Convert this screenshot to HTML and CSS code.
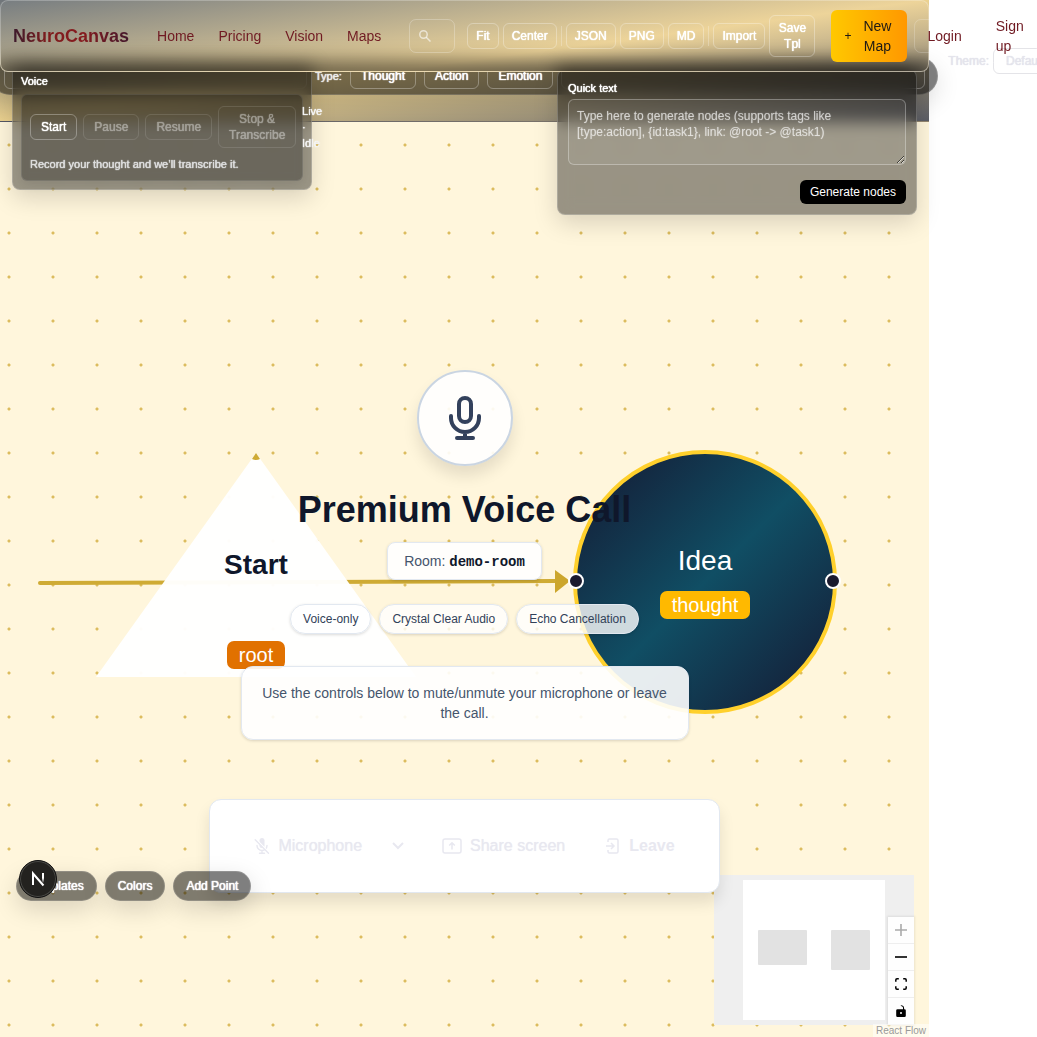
FILE: index.html
```html
<!DOCTYPE html>
<html lang="en">
<head>
<meta charset="utf-8">
<meta name="viewport" content="width=device-width, initial-scale=1">
<title>NeuroCanvas</title>
<link rel="stylesheet" href="styles.css">
</head>
<body>
<div class="app">
  <div class="band">
    <div class="themes">
      <label class="themes-label" for="theme">Theme:</label>
      <select class="themes-select" id="theme"><option>Default</option></select>
    </div>
    <div class="types">
      <span class="types-start"></span>
      <span class="types-label">Type:</span>
      <button class="btn btn-type">Thought</button>
      <button class="btn btn-type">Action</button>
      <button class="btn btn-type">Emotion</button>
      <span class="types-rest"></span>
    </div>
  </div>

  <main class="canvas">
    <svg class="edge" viewBox="0 0 540 30" aria-hidden="true">
      <path d="M3 16 L519 14" stroke="#cfab34" stroke-width="4" stroke-linecap="round"/>
      <path d="M518 3 L533 14 L518 26 Z" fill="#cca62c"/>
    </svg>
    <div class="node root-node">
      <svg class="root-shape" viewBox="0 0 320 224" aria-hidden="true">
        <path d="M160 0 L320 224 H0 Z" fill="#fff" fill-opacity=".97"/>
        <path d="M160 0 L164 6 Q160 8 156 6 Z" fill="#cfab34"/>
      </svg>
      <strong class="node-title root-title">Start</strong>
      <span class="tag tag-root">root</span>
    </div>
    <div class="node idea-node">
      <span class="node-title">Idea</span>
      <span class="tag tag-thought">thought</span>
      <i class="handle handle-left"></i>
      <i class="handle handle-right"></i>
    </div>

    <div class="map-tools">
      <svg class="minimap" viewBox="0 0 200 150" role="img" aria-label="Mini map">
        <rect width="200" height="150" fill="#efefef"/>
        <rect x="29" y="5" width="142" height="140" fill="#fff"/>
        <rect x="44" y="55" width="49" height="35" rx="1" fill="#e2e2e2"/>
        <rect x="117" y="55" width="39" height="40" rx="1" fill="#e2e2e2"/>
      </svg>
      <div class="zoom">
        <button class="zoom-btn" aria-label="Zoom in" disabled><svg viewBox="0 0 12 12"><path d="M6 0v12M0 6h12" stroke="#aaa" stroke-width="1.6"/></svg></button>
        <button class="zoom-btn" aria-label="Zoom out"><svg viewBox="0 0 12 12"><path d="M0 6h12" stroke="#000" stroke-width="1.6"/></svg></button>
        <button class="zoom-btn" aria-label="Fit view"><svg viewBox="0 0 12 12"><path d="M.8 3.8V2Q.8.8 2 .8h1.8M8.2.8H10q1.2 0 1.2 1.2v1.8M11.2 8.2V10q0 1.2-1.2 1.2H8.2M3.8 11.2H2Q.8 11.2.8 10V8.2" fill="none" stroke="#000" stroke-width="1.5"/></svg></button>
        <button class="zoom-btn" aria-label="Toggle lock"><svg viewBox="0 0 12 12"><path d="M2.5 4.3H8V2.6Q7.600 1 6 .9L5.700.2Q8.900.1 9.100 3v1.300h.4q1.300 0 1.300 1.200v5.200Q10.800 12 9.500 12h-7Q1.200 12 1.200 10.700V5.500Q1.200 4.300 2.500 4.300ZM6 7a1 1 0 1 0 0 2 1 1 0 0 0 0-2Z" fill="#000" fill-rule="evenodd"/></svg></button>
      </div>
    </div>
    <a class="credit" href="#">React Flow</a>
  </main>

  <section class="call">
    <div class="call-mic">
      <svg viewBox="0 0 48 48" fill="none" stroke="#33415c" stroke-width="4" stroke-linecap="round" aria-hidden="true">
        <rect x="18" y="4" width="12" height="24" rx="6"/>
        <path d="M10 22v2a14 14 0 0 0 28 0v-2M24 38v6M16 44h16"/>
      </svg>
    </div>
    <h1 class="call-title">Premium Voice Call</h1>
    <p class="call-room">Room: <code>demo-room</code></p>
    <ul class="chips">
      <li>Voice-only</li>
      <li>Crystal Clear Audio</li>
      <li>Echo Cancellation</li>
    </ul>
    <p class="call-info">Use the controls below to mute/unmute your microphone or leave the call.</p>
    <div class="call-bar">
      <button class="ctl ctl-mic">
        <svg width="16" height="16" viewBox="0 0 16 16" fill="none" stroke="currentColor" stroke-width="1.400" stroke-linecap="round"><rect x="5.500" y="0" width="5" height="10" rx="2.500" fill="currentColor" stroke="none"/><path d="M3 7.500a5 5 0 0 0 10 0M8 12.500v2.700M5.500 15.300h5"/><path d="M2.500 1.500l13 13.500" stroke="#fff" stroke-width="1.200"/><path d="M1.200 1.700l13.300 13.500"/></svg>
        Microphone
      </button>
      <button class="ctl ctl-menu" aria-label="Choose microphone">
        <svg width="12" height="8" viewBox="0 0 12 8" fill="none" stroke="currentColor" stroke-width="2"><path d="M1 1l5 5 5-5"/></svg>
      </button>
      <button class="ctl ctl-share">
        <svg width="20" height="16" viewBox="0 0 20 16" fill="none" stroke="currentColor" stroke-width="1.500"><rect x="1" y="1" width="18" height="14" rx="2"/><path d="M10 11.500V5M7.200 7.500L10 4.700l2.800 2.800"/></svg>
        Share screen
      </button>
      <button class="ctl ctl-leave">
        <svg width="16" height="16" viewBox="0 0 16 16" fill="none" stroke="currentColor" stroke-width="1.500"><path d="M3 4V2.500Q3 1 4.500 1h7Q13 1 13 2.500v11Q13 15 11.500 15h-7Q3 15 3 13.500V12M1 8h7.500M6 5l3 3-3 3"/></svg>
        Leave
      </button>
    </div>
  </section>

  <section class="panel voice">
    <h2 class="panel-title">Voice</h2>
    <div class="recorder">
      <div class="recorder-row">
        <button class="btn btn-rec">Start</button>
        <button class="btn btn-rec" disabled>Pause</button>
        <button class="btn btn-rec" disabled>Resume</button>
        <button class="btn btn-rec btn-stop" disabled>Stop &amp; Transcribe</button>
        <span class="recorder-state">Live · Idle</span>
      </div>
      <p class="recorder-note">Record your thought and we’ll transcribe it.</p>
    </div>
  </section>

  <section class="panel quick">
    <label class="panel-title" for="quick-text">Quick text</label>
    <textarea class="quick-input" id="quick-text" rows="3" placeholder="Type here to generate nodes (supports tags like [type:action], {id:task1}, link: @root -&gt; @task1)"></textarea>
    <button class="quick-go">Generate nodes</button>
  </section>

  <div class="dock">
    <button class="dock-btn">Templates</button>
    <button class="dock-btn">Colors</button>
    <button class="dock-btn">Add Point</button>
    <button class="dev" aria-label="Developer tools">
      <svg viewBox="0 0 36 36" aria-hidden="true">
        <defs><linearGradient id="fade" x1="0" y1="0" x2="0" y2="1"><stop offset=".5" stop-color="#fff"/><stop offset="1" stop-color="#fff" stop-opacity="0"/></linearGradient></defs>
        <path d="M13 24V12.500L23.500 24.500" fill="none" stroke="#fff" stroke-width="2"/>
        <rect x="22" y="12" width="2" height="10" fill="url(#fade)"/>
      </svg>
    </button>
  </div>

  <header class="nav">
    <div class="glass" aria-hidden="true">
      <i class="shade shade-types"></i>
      <i class="shade shade-voice"></i>
      <i class="shade shade-quick"></i>
    </div>
    <a class="logo" href="#">NeuroCanvas</a>
    <nav class="links">
      <a href="#">Home</a>
      <a href="#">Pricing</a>
      <a href="#">Vision</a>
      <a href="#">Maps</a>
    </nav>
    <div class="search">
      <svg viewBox="0 0 12 12" fill="none" stroke="currentColor" stroke-width="1.500" aria-hidden="true"><circle cx="4.500" cy="4.500" r="3.700"/><path d="M7.200 7.200l4.300 4.300"/></svg>
      <input type="search" aria-label="Search">
    </div>
    <div class="actions">
      <button class="btn">Fit</button>
      <button class="btn">Center</button>
      <i class="rule"></i>
      <button class="btn">JSON</button>
      <button class="btn">PNG</button>
      <button class="btn">MD</button>
      <i class="rule"></i>
      <button class="btn">Import</button>
      <button class="btn btn-save">Save Tpl</button>
    </div>
    <button class="new-map"><span class="plus">+</span><span>New Map</span></button>
    <div class="account">
      <a href="#">Login</a>
      <a href="#" class="signup">Sign up</a>
    </div>
  </header>
</div>
</body>
</html>
```

FILE: styles.css
```css
* { box-sizing: border-box; }

body {
  margin: 0;
  background: #fff;
  color: #fff;
  font: 14px/20px "Liberation Sans", Arial, sans-serif;
  overflow-x: hidden;
}

h1, h2, p, ul { margin: 0; padding: 0; }
button, input, textarea, select { font: inherit; color: inherit; margin: 0; }
a { text-decoration: none; }

.app {
  position: relative;
  display: flex;
  flex-direction: column;
  width: calc(100% - 108px);
  min-height: 100vh;
}

.btn {
  flex: none;
  padding: 4px 8px;
  border: 1px solid rgba(255, 255, 255, .3);
  border-radius: 6px;
  background: transparent;
  color: #fff;
  font-size: 12px;
  line-height: 16px;
}
.btn, .themes, .types-label, .panel-title, .recorder-state, .recorder-note, .dock-btn {
  text-shadow: 0 0 1px currentColor, 0 0 1px currentColor;
}
.btn:disabled { opacity: .4; }

/* gradient band with the theme and type rows */
.band {
  height: 122px;
  padding-top: 48px;
  border-bottom: 1px solid rgba(60, 60, 80, .5);
  background: linear-gradient(to bottom right, #6f757a, #ecd290 50%, #5c5e66);
}
.themes {
  display: flex;
  align-items: center;
  gap: 4px;
  height: 26px;
  margin-right: -160px;
  justify-content: flex-end;
  color: #e4e4ec;
  font-size: 12px;
  line-height: 16px;
}
.themes-select {
  appearance: none;
  width: 96px;
  height: 26px;
  padding: 0 12px;
  border: 1px solid #e4e4e8;
  border-radius: 6px;
  background: #fff;
  text-shadow: inherit;
}
.types {
  display: flex;
  align-items: center;
  gap: 8px;
  height: 38px;
  margin: -17px -9px 0;
  padding: 6px 12px;
  border: 1px solid rgba(255, 255, 255, .15);
  border-radius: 19px;
  background: rgba(0, 0, 0, .5);
  box-shadow: 0 8px 24px rgba(0, 0, 0, .12);
}
.types-start, .types-rest {
  height: 26px;
  border: 1px solid rgba(255, 255, 255, .3);
  border-radius: 6px;
}
.types-start { width: 303px; flex: none; }
.types-rest { flex: 1; }
.types-label {
  flex: none;
  width: 27px;
  font-size: 11px;
  line-height: 16px;
  color: #eee;
}
.btn-type { padding: 4px 10px; }

/* canvas */
.canvas {
  position: relative;
  flex: 1;
  min-height: 915px;
  background: radial-gradient(circle at 2px 2px, #dcbc5e 1px, transparent 2px) 7px 21px / 44px 44px, #fff6dc;
}
.edge { position: absolute; left: 37px; top: 445px; width: 540px; height: 30px; fill: none; }
.node {
  position: absolute;
  display: flex;
  flex-direction: column;
  align-items: center;
}
.node-title { font-size: 28px; line-height: 32px; font-weight: 400; }
.root-node { left: 96px; top: 331px; width: 320px; height: 224px; padding-top: 96px; }
.root-shape { position: absolute; inset: 0; }
.root-title { position: relative; color: #0f172b; font-weight: 700; margin-bottom: 60px; }
.tag {
  position: relative;
  flex: none;
  padding: 0 12px;
  border-radius: 7px;
  font-size: 20px;
  line-height: 28px;
}
.tag-root { background: #e17100; }
.tag-thought { background: #ffb900; }
.idea-node {
  left: 573px;
  top: 328px;
  width: 264px;
  height: 264px;
  padding-top: 91px;
  gap: 14px;
  border: 4px solid #ffd02c;
  border-radius: 50%;
  background: linear-gradient(135deg, #14213a 8%, #104e64 50%, #14213a 92%);
}
.handle {
  position: absolute;
  top: 119px;
  width: 16px;
  height: 16px;
  border: 2px solid #fff;
  border-radius: 50%;
  background: #1a1a2e;
}
.handle-left { left: -9px; }
.handle-right { right: -8px; }

.map-tools {
  position: absolute;
  right: 15px;
  bottom: 12px;
  display: grid;
  justify-items: end;
  align-items: end;
}
.minimap, .zoom { grid-area: 1 / 1; }
.minimap { width: 200px; height: 150px; display: block; }
.zoom { width: 26px; box-shadow: 0 0 2px 1px rgba(0, 0, 0, .08); }
.zoom-btn {
  display: grid;
  place-items: center;
  width: 26px;
  height: 27px;
  padding: 0;
  border: 0;
  border-bottom: 1px solid #eee;
  background: #fefefe;
}
.zoom-btn svg { width: 12px; height: 12px; }
.credit {
  position: absolute;
  right: 0;
  bottom: 0;
  padding: 0 3px;
  background: rgba(255, 255, 255, .5);
  color: #999;
  font-size: 10px;
  line-height: 13px;
}

/* voice call */
.call {
  position: absolute;
  inset: 370px 0 auto;
  display: flex;
  flex-direction: column;
  align-items: center;
  color: #45556c;
}
.call-mic {
  display: grid;
  place-items: center;
  width: 96px;
  height: 96px;
  border: 2px solid #cad5e2;
  border-radius: 50%;
  background: rgba(255, 255, 255, .9);
  box-shadow: 0 10px 15px rgba(0, 0, 0, .1);
}
.call-mic svg { width: 48px; height: 48px; }
.call-title {
  margin-top: 24px;
  color: #0f172b;
  font-size: 36px;
  line-height: 40px;
  white-space: nowrap;
}
.call-room {
  height: 38px;
  margin-top: 12px;
  padding: 8px 16px;
  border: 1px solid #e2e8f0;
  border-radius: 8px;
  background: rgba(255, 255, 255, .9);
  box-shadow: 0 1px 3px rgba(0, 0, 0, .15);
}
.call-room code {
  color: #0f172b;
  font: bold 14px/20px "Liberation Mono", monospace;
}
.chips {
  display: flex;
  gap: 8px;
  margin-top: 24px;
  list-style: none;
}
.chips li {
  padding: 6px 12px;
  border: 1px solid #e2e8f0;
  border-radius: 15px;
  background: rgba(255, 255, 255, .8);
  box-shadow: 0 1px 3px rgba(0, 0, 0, .15);
  color: #314158;
  font-size: 12px;
  line-height: 16px;
}
.call-info {
  max-width: 448px;
  margin-top: 32px;
  padding: 16px 20px;
  border: 1px solid #e2e8f0;
  border-radius: 12px;
  background: rgba(255, 255, 255, .9);
  box-shadow: 0 1px 3px rgba(0, 0, 0, .15);
  text-align: center;
}
.call-bar {
  display: flex;
  align-items: center;
  height: 94px;
  margin-top: 59px;
  padding: 0 44px;
  border: 1px solid #e2e8f0;
  border-radius: 12px;
  background: #fff;
  box-shadow: 0 10px 15px rgba(0, 0, 0, .1);
}
.ctl {
  display: flex;
  align-items: center;
  gap: 8px;
  padding: 0;
  border: 0;
  background: none;
  color: #e8e8f0;
  font-size: 16px;
  line-height: 24px;
  text-shadow: 0 0 1px currentColor;
}
.ctl-menu { margin: 0 38px 0 30px; }
.ctl-share { margin-right: 40px; }
.ctl-leave { font-weight: 700; text-shadow: none; }

/* floating panels */
.panel {
  position: absolute;
  border: 1px solid rgba(255, 255, 255, .2);
  border-radius: 8px;
  background: rgba(0, 0, 0, .4);
  backdrop-filter: blur(8px);
  box-shadow: 0 8px 24px rgba(0, 0, 0, .15);
}
.panel-title {
  display: block;
  font-size: 11px;
  line-height: 16px;
  font-weight: 400;
}
.voice { left: 12px; top: 64px; width: 300px; padding: 8px; }
.recorder {
  margin-top: 5px;
  padding: 8px;
  border: 1px solid rgba(255, 255, 255, .1);
  border-radius: 6px;
  background: rgba(0, 0, 0, .3);
  box-shadow: 0 4px 12px rgba(0, 0, 0, .1);
}
.recorder-row { display: flex; align-items: center; gap: 6px; }
.btn-rec { padding: 4px 10px; }
.btn-stop { width: 78px; }
.recorder-state {
  flex: none;
  width: 20px;
  color: #f4f4f4;
  font-size: 11px;
  line-height: 16px;
}
.recorder-note {
  margin-top: 5px;
  color: #ddd;
  font-size: 11px;
  line-height: 16px;
}
.quick {
  right: 12px;
  top: 69px;
  display: flex;
  flex-direction: column;
  width: 360px;
  padding: 10px;
}
.quick-input {
  height: 66px;
  margin-top: 3px;
  padding: 8px;
  border: 1px solid rgba(255, 255, 255, .3);
  border-radius: 6px;
  background: rgba(255, 255, 255, .05);
  font-size: 12px;
  line-height: 16px;
}
.quick-input::placeholder { color: rgba(255, 255, 255, .5); text-shadow: 0 0 1px rgba(255, 255, 255, .5); }
.quick-go {
  align-self: flex-end;
  margin-top: 15px;
  padding: 4px 10px;
  border: 0;
  border-radius: 6px;
  background: #000;
  color: #fff;
  font-size: 12px;
  line-height: 16px;
}

/* bottom-left actions */
.dock { position: absolute; left: 16px; top: 871px; display: flex; gap: 8px; }
.dock-btn {
  padding: 6px 12px;
  border: 1px solid rgba(255, 255, 255, .15);
  border-radius: 15px;
  background: rgba(0, 0, 0, .5);
  box-shadow: 0 8px 24px rgba(0, 0, 0, .15);
  font-size: 12px;
  line-height: 16px;
}
.dev {
  position: absolute;
  left: 3px;
  top: -11px;
  width: 38px;
  height: 38px;
  padding: 0;
  border: 1px solid #111;
  border-radius: 50%;
  background: #23221f;
  box-shadow: inset 0 0 0 1px #4a4a46;
}
.dev svg { display: block; width: 36px; height: 36px; }

/* top navigation */
.nav {
  position: absolute;
  inset: 0 0 auto;
  z-index: 10;
  display: flex;
  align-items: center;
  height: 72px;
  padding-left: 13px;
}
/* frosted backdrop: the band gradient with soft shades of the panels below */
.glass {
  position: absolute;
  inset: 0;
  z-index: -1;
  overflow: hidden;
  border: 1px solid rgba(255, 255, 255, .25);
  border-radius: 8px;
  background: linear-gradient(to bottom right, #777d81, #edd49a 50%, #5c5e66) border-box 0 0 / 100% 122px;
}
.shade {
  position: absolute;
  height: 80px;
  filter: blur(9px);
}
.shade-types { inset: 59px -9px auto; background: rgba(0, 0, 0, .5); }
.shade-voice { left: 12px; top: 64px; width: 300px; background: rgba(0, 0, 0, .4); }
.shade-quick { right: 12px; top: 66px; width: 360px; background: rgba(0, 0, 0, .5); }
.logo {
  flex: none;
  font-size: 18px;
  font-weight: 700;
  background: linear-gradient(90deg, #3c1a2c, #7f1d1d 30%, #861b1f 60%, #43182c);
  background-clip: text;
  color: transparent;
}
.links { display: flex; gap: 24px; margin-left: 28px; }
.links a, .account a { color: #701a22; }
.search {
  display: flex;
  flex: none;
  align-items: center;
  width: 46px;
  height: 34px;
  margin-left: 28px;
  padding: 0 9px;
  border: 1px solid rgba(255, 255, 255, .25);
  border-radius: 7px;
  color: rgba(255, 255, 255, .6);
}
.search svg { flex: none; width: 12px; height: 12px; }
.search input { width: 12px; min-width: 0; padding: 0; border: 0; outline: 0; background: none; appearance: none; }
.actions { display: flex; align-items: center; gap: 4px; margin-left: 12px; }
.actions .btn { border-color: rgba(255, 255, 255, .3); }
.rule { width: 1px; height: 20px; background: rgba(255, 255, 255, .25); }
.actions .btn-save { width: 46px; }
.new-map {
  display: flex;
  flex: none;
  align-items: center;
  gap: 9px;
  width: 76px;
  height: 52px;
  margin-left: 16px;
  padding: 0 13px;
  border: 0;
  border-radius: 6px;
  background: linear-gradient(90deg, #ffc800, #ff9800);
  color: #1f1a14;
}
.plus { font-size: 12px; }
.account { display: flex; flex: none; align-items: center; gap: 8px; margin: 0 -108px 0 7px; }
.account a {
  padding: 6px 12px;
  border: 1px solid rgba(255, 255, 255, .2);
  border-radius: 7px;
}
.signup { width: 54px; }
```
